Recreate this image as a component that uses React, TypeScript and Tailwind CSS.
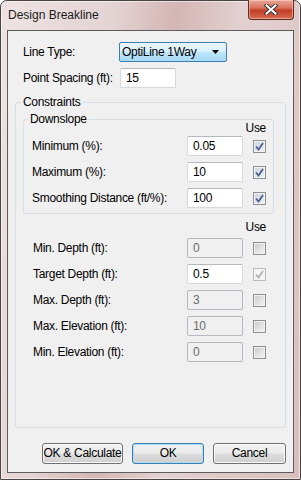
import React from "react";

// Win7-style "Design Breakline" dialog
const Check = ({ color }: { color: string }) => (
  <svg width="9" height="9" viewBox="0 0 9 9" className="block">
    <path d="M1 4.5 L3.5 7.5 L8 1" fill="none" stroke={color} strokeWidth="1.8" />
  </svg>
);

function CheckBox({ checked, disabled }: { checked?: boolean; disabled?: boolean }) {
  if (checked && disabled) {
    return (
      <span className="flex h-[13px] w-[13px] items-center justify-center border border-[#bcbcbc] bg-[#f4f4f4]">
        <Check color="#b3b3b3" />
      </span>
    );
  }
  if (checked) {
    return (
      <span className="flex h-[13px] w-[13px] items-center justify-center border border-[#8e8f8f] bg-[linear-gradient(135deg,#cdd3da,#eef1f4)] shadow-[inset_0_0_0_1px_#f4f4f4]">
        <Check color="#4b5f92" />
      </span>
    );
  }
  return (
    <span className="block h-[13px] w-[13px] border border-[#8e8f8f] bg-[linear-gradient(135deg,#c9c9c9,#f7f7f7)] shadow-[inset_0_0_0_1px_#f1f1f1]" />
  );
}

function Field({ value, disabled }: { value: string; disabled?: boolean }) {
  return (
    <div
      className={
        disabled
          ? "flex h-[20px] items-center rounded-[2px] border border-[#b5b8bc] bg-[#f0f0f0] pl-[5px] text-[#6d6d6d]"
          : "flex h-[20px] items-center rounded-[2px] border border-[#d5d8dc] border-t-[#b5b8bf] bg-white pl-[5px]"
      }
    >
      {value}
    </div>
  );
}

function Row({ label, value, checked, disabled, boxDisabled }: { label: string; value: string; checked?: boolean; disabled?: boolean; boxDisabled?: boolean }) {
  return (
    <div className="grid h-[20px] grid-cols-[1fr_56px_13px] items-center gap-x-[10px]">
      <span className="whitespace-nowrap">{label}</span>
      <Field value={value} disabled={disabled} />
      <CheckBox checked={checked} disabled={boxDisabled} />
    </div>
  );
}

function Btn({ children, primary, w }: { children: React.ReactNode; primary?: boolean; w: string }) {
  return (
    <button
      className={`${w} h-[21px] whitespace-nowrap rounded-[3px] border ${
        primary
          ? "border-[#3c7fb1] shadow-[inset_0_0_0_1px_#a9dcf6]"
          : "border-[#707070] shadow-[inset_0_0_0_1px_#fbfbfb]"
      } bg-[linear-gradient(180deg,#f2f2f2_0%,#ebebeb_48%,#dddddd_52%,#cfcfcf_100%)] leading-[19px]`}
    >
      {children}
    </button>
  );
}

export default function App() {
  return (
    <div className="h-[480px] w-[301px] font-['Liberation_Sans',Arial,sans-serif] text-[12px] leading-[16px] text-black">
      <div className="flex h-full w-full flex-col rounded-t-[7px] border border-[#4a4444] bg-[linear-gradient(100deg,#eee3e3_0%,#e4d3d3_30%,#d3b6b5_46%,#e3d1d1_64%,#d8bfbe_100%)] px-[6px] pb-[6px] shadow-[inset_0_0_0_1px_rgba(255,255,255,0.55)]">
        {/* title bar */}
        <div className="flex h-[29px] items-start justify-between">
          <span className="pl-[1px] pt-[6px] text-[#1b1b1b]">Design Breakline</span>
          <button className="-mt-[1px] flex h-[20px] w-[46px] items-center justify-center rounded-b-[4px] border border-t-0 border-[#5e2a22] bg-[linear-gradient(180deg,#eaa89a_0%,#d9735f_40%,#c33f27_55%,#d76a4f_100%)] shadow-[inset_0_0_0_1px_rgba(255,220,210,0.5)]">
            <svg width="14" height="11" viewBox="0 0 14 11">
              <path d="M2.5 1.5 L11.5 9.5 M11.5 1.5 L2.5 9.5" stroke="#3a3a3a" strokeWidth="4" strokeLinecap="square" />
              <path d="M2.5 1.5 L11.5 9.5 M11.5 1.5 L2.5 9.5" stroke="#ffffff" strokeWidth="2" strokeLinecap="square" />
            </svg>
          </button>
        </div>

        {/* client area */}
        <div className="flex flex-1 flex-col border border-[#5d5d5d] bg-[#f0f0f0] tracking-[-0.3px]">
          <div className="mt-[11px] flex items-center pl-[15px]">
            <span className="w-[96px]">Line Type:</span>
            <div className="flex h-[20px] w-[108px] items-center justify-between rounded-[2px] border border-[#3c7fb1] bg-[linear-gradient(180deg,#eaf6fd_0%,#d9f0fc_48%,#bee6fd_52%,#a7d9f5_100%)] pl-[2px] pr-[7px]">
              <span>OptiLine 1Way</span>
              <svg width="7" height="4" viewBox="0 0 7 4">
                <path d="M0 0 H7 L3.5 4 Z" fill="#000" />
              </svg>
            </div>
          </div>
          <div className="mt-[6px] flex items-center pl-[15px]">
            <span className="w-[97px] whitespace-nowrap">Point Spacing (ft):</span>
            <div className="w-[56px]">
              <Field value="15" />
            </div>
          </div>

          <fieldset className="mx-[7px] mt-[6px] flex flex-1 flex-col rounded-[3px] border border-[#d5dfe5] pl-[7px] pr-[11px]">
            <legend className="-ml-[2px] px-[2px]">Constraints</legend>

            <fieldset className="mt-[1px] rounded-[3px] border border-[#d5dfe5] pb-[5px] pl-[8px] pr-[7px]">
              <legend className="-ml-[4px] px-[2px]">Downslope</legend>
              <div className="-mt-[6px] text-right leading-[14px]">Use</div>
              <div className="mt-[1px] flex flex-col gap-[6px]">
                <Row label="Minimum (%):" value="0.05" checked />
                <Row label="Maximum (%):" value="10" checked />
                <Row label="Smoothing Distance (ft/%):" value="100" checked />
              </div>
            </fieldset>

            <div className="mt-[6px] pr-[8px] text-right leading-[14px]">Use</div>
            <div className="mt-[4px] flex flex-col gap-[6px] pl-[10px] pr-[8px]">
              <Row label="Min. Depth (ft):" value="0" disabled />
              <Row label="Target Depth (ft):" value="0.5" checked boxDisabled />
              <Row label="Max. Depth (ft):" value="3" disabled />
              <Row label="Max. Elevation (ft):" value="10" disabled />
              <Row label="Min. Elevation (ft):" value="0" disabled />
            </div>
          </fieldset>

          <div className="mb-[8px] mt-[15px] flex justify-end gap-[9px] pr-[7px]">
            <Btn w="w-[81px]">OK &amp; Calculate</Btn>
            <Btn w="w-[72px]" primary>
              OK
            </Btn>
            <Btn w="w-[73px]">Cancel</Btn>
          </div>
        </div>
      </div>
    </div>
  );
}
